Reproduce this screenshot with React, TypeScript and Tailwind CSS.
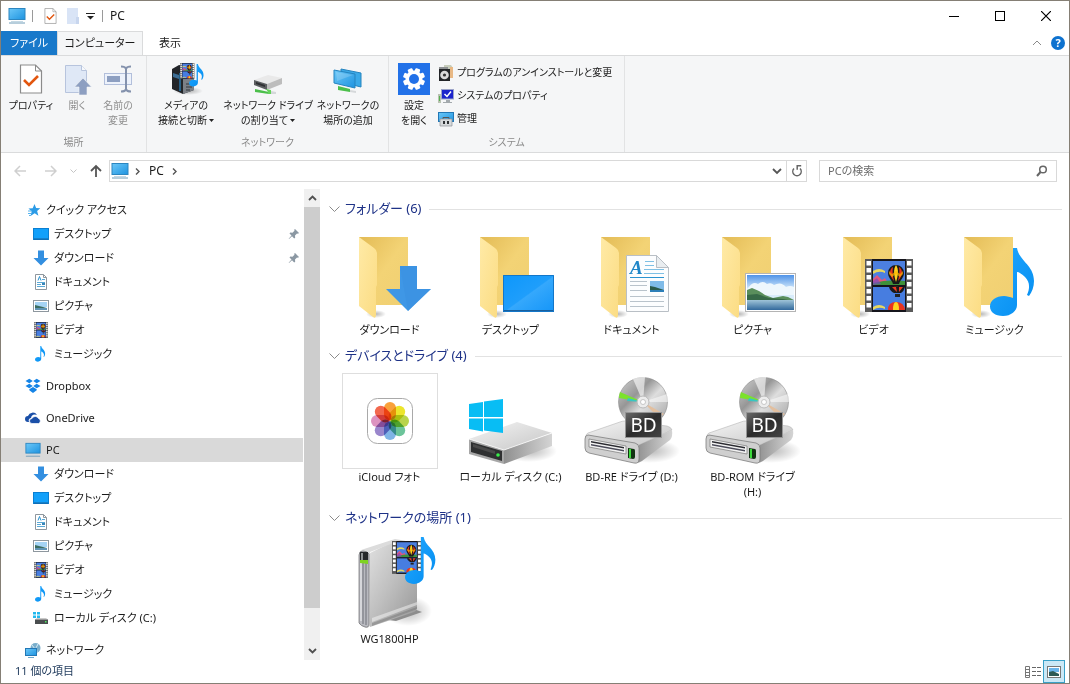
import React, { ReactNode } from "react";

/* ---------- shared drawing parts ---------- */

function Defs() {
  return (
    <svg width="0" height="0" className="absolute" aria-hidden="true">
      <defs>
        <linearGradient id="folderBack" x1="0" y1="0" x2="1" y2="1">
          <stop offset="0" stopColor="#e3bb55" />
          <stop offset="0.5" stopColor="#f3d375" />
          <stop offset="1" stopColor="#f0cf72" />
        </linearGradient>
        <linearGradient id="folderFront" x1="0" y1="0" x2="1" y2="1">
          <stop offset="0" stopColor="#ffeaa6" />
          <stop offset="1" stopColor="#fbdc83" />
        </linearGradient>
        <linearGradient id="screen" x1="0" y1="0" x2="1" y2="1">
          <stop offset="0" stopColor="#6cc8f8" />
          <stop offset="1" stopColor="#1d93e0" />
        </linearGradient>
        <linearGradient id="desk" x1="0" y1="0" x2="1" y2="1">
          <stop offset="0" stopColor="#0d97fb" />
          <stop offset="0.5" stopColor="#1f9efb" />
          <stop offset="0.52" stopColor="#35a8fc" />
          <stop offset="1" stopColor="#1495f8" />
        </linearGradient>
        <linearGradient id="metalTop" x1="0" y1="0" x2="1" y2="1">
          <stop offset="0" stopColor="#f4f4f4" />
          <stop offset="1" stopColor="#c6c6c6" />
        </linearGradient>
        <linearGradient id="metalSide" x1="0" y1="0" x2="1" y2="0">
          <stop offset="0" stopColor="#8f8f8f" />
          <stop offset="0.6" stopColor="#bababa" />
          <stop offset="1" stopColor="#d4d4d4" />
        </linearGradient>
        <linearGradient id="tower" x1="0" y1="0" x2="1" y2="1">
          <stop offset="0" stopColor="#e2e2e2" />
          <stop offset="0.5" stopColor="#bebebe" />
          <stop offset="1" stopColor="#959595" />
        </linearGradient>
        <linearGradient id="disc" x1="0" y1="0" x2="1" y2="1">
          <stop offset="0" stopColor="#d4d4d4" />
          <stop offset="0.35" stopColor="#969696" />
          <stop offset="0.55" stopColor="#dedede" />
          <stop offset="1" stopColor="#9e9e9e" />
        </linearGradient>
        <linearGradient id="sky" x1="0" y1="0" x2="0" y2="1">
          <stop offset="0" stopColor="#4f93e8" />
          <stop offset="0.55" stopColor="#d8ecfb" />
        </linearGradient>
        <linearGradient id="sea" x1="0" y1="0" x2="0" y2="1">
          <stop offset="0" stopColor="#9fc4d8" />
          <stop offset="1" stopColor="#32699c" />
        </linearGradient>
        <linearGradient id="note" x1="0" y1="0" x2="1" y2="1">
          <stop offset="0" stopColor="#22a8ff" />
          <stop offset="1" stopColor="#048df0" />
        </linearGradient>
        <linearGradient id="plate" x1="0" y1="0" x2="1" y2="1">
          <stop offset="0" stopColor="#6a6a6a" />
          <stop offset="0.5" stopColor="#2c2c2c" />
          <stop offset="1" stopColor="#454545" />
        </linearGradient>
        <radialGradient id="soft">
          <stop offset="0" stopColor="#000" stopOpacity="0.28" />
          <stop offset="1" stopColor="#000" stopOpacity="0" />
        </radialGradient>
      </defs>
    </svg>
  );
}

function Balloon({ x, y }: { x: number; y: number }) {
  return (
    <g transform={`translate(${x} ${y})`}>
      <path d="M-8 0a8 8 0 0 1 16 0c0 5-4 7-5 11h-6c-1-4-5-6-5-11z" fill="#1a1a1a" />
      <path d="M-6 0a6 7 0 0 1 3-6c-1 5 0 9 1 14c-2-3-4-5-4-8z" fill="#e8331e" />
      <path d="M6 0a6 7 0 0 0-3-6c1 5 0 9-1 14c2-3 4-5 4-8z" fill="#e8331e" />
      <path d="M0-8c-3 4-2 11 0 17c2-6 3-13 0-17z" fill="#ffd21f" />
      <path d="M-7-2l3 3l4-3l4 3l3-3v3l-3 3l-4-3l-4 3l-3-3z" fill="#ffb400" opacity="0.7" />
      <rect x="-2" y="13" width="4" height="3" fill="#3a2412" />
    </g>
  );
}

/* 48 x 53 strip of film */
function Film() {
  const holes = [2, 9, 16, 23, 30, 37, 44];
  return (
    <g>
      <rect width="48" height="53" fill="#5a5a5a" />
      <rect x="7" width="34" height="53" fill="#15151c" />
      <rect x="8" y="2" width="32" height="24" fill="#4c7fe0" />
      <path d="M8 12q6-4 12 0v2q-6-3-12 1z" fill="#e6d860" />
      <path d="M8 26v-6l4-4l5 5l3-2l4 7z" fill="#e2567e" />
      <path d="M8 26v-2q16-4 32-2v4z" fill="#3f9139" />
      <path d="M8 26v-4l4-3l4 6z" fill="#7a4ac0" opacity="0.7" />
      <Balloon x={31} y={14} />
      <rect x="8" y="28" width="32" height="23" fill="#477de0" />
      <path d="M24 28h16q-1 4-4 6h-7q-4-2-5-6z" fill="#1a1a1a" />
      <path d="M27 28h4l1 5zM34 28h4l-4 5z" fill="#ee3a24" />
      <rect x="30" y="35" width="5" height="3" fill="#222" />
      <path d="M8 48q6-4 12 0v2q-6-3-12 1z" fill="#e6d860" />
      <path d="M23 51q0-8 8-8t9 8z" fill="#e8331e" />
      <path d="M28 51q0-8 3-8t3 8z" fill="#ffd21f" />
      {holes.map((y) => (
        <g key={y} fill="#fff">
          <rect x="1.500" y={y} width="4.500" height="4.500" />
          <rect x="42" y={y} width="4.500" height="4.500" />
        </g>
      ))}
    </g>
  );
}

/* note drawn inside 46 x 68 */
function Note() {
  return (
    <path
      d="M23 0h4c2 13 17 17 17 33c0 6-2 11-5 15l-2-1c3-7 3-13-2-18c-3-3-6-5-8-5v33c0 6-6 11-14 11s-13-4-13-9.500c0-6 6-10.500 14-10.500c3 0 6 1 9 2z"
      fill="url(#note)"
    />
  );
}

function Photo({ w, h }: { w: number; h: number }) {
  return (
    <svg width={w} height={h} viewBox="0 0 51 39" preserveAspectRatio="none">
      <rect x="0.5" y="0.5" width="50" height="38" fill="#fff" stroke="#b4b4b4" />
      <rect x="2" y="2" width="47" height="26" fill="url(#sky)" />
      <path d="M4 14q4-6 9-3q5-4 9 0q4-2 7 1q7-4 12 2q4-2 8 0v8H2v-6z" fill="#eef7fd" />
      <path d="M2 17l5-2l7 3l6 4l8 3l10-2l5 1l6 3v1H2z" fill="#5a8f5c" />
      <path d="M2 22l10-1l12 4l14 1l11 2H2z" fill="#376a48" />
      <rect x="2" y="27" width="47" height="10" fill="url(#sea)" />
    </svg>
  );
}

/* ---------- large 96px icons ---------- */

function Big({ children }: { children: ReactNode }) {
  return (
    <svg width="96" height="96" viewBox="0 0 96 96" className="block" aria-hidden="true">
      {children}
    </svg>
  );
}

function Folder({ children }: { children: ReactNode }) {
  return (
    <Big>
      <ellipse cx="34" cy="88" rx="10" ry="4" fill="url(#soft)" />
      <path d="M17 11h49v68H17z" fill="url(#folderBack)" />
      <path d="M17 11l15 11q3 2 3 5v32l-1 2v28q0 4-3 2L17 80z" fill="url(#folderFront)" />
      {children}
    </Big>
  );
}

const DownloadFolder = () => (
  <Folder>
    <path d="M58 40h17v23h14L66 85L44 63h14z" fill="#3f97e6" />
    <path d="M58 40h17v23h14L66 85z" fill="#3a8fdf" opacity="0.5" />
  </Folder>
);

const DesktopFolder = () => (
  <Folder>
    <rect x="40" y="49" width="51" height="37" fill="url(#desk)" />
    <path d="M40 84h51v2H40z" fill="#1a5f9c" />
    <path d="M40.500 49.500h50v36h-50z" fill="none" stroke="#1377c9" />
  </Folder>
);

const DocumentFolder = () => (
  <Folder>
    <path d="M42.500 29.500h30l12 12v44h-42z" fill="#fcfdfe" stroke="#b9bfc5" />
    <path d="M72.500 29.500v12h12z" fill="#e9edf0" stroke="#b9bfc5" />
    <text x="46" y="48" fontSize="19" fontStyle="italic" fontWeight="bold" fontFamily="Liberation Serif, serif" fill="#1f86c8">
      A
    </text>
    <path d="M61 35.500h9M61 39.500h9M60 43.500h20M60 47.500h20" stroke="#7fc0e4" fill="none" />
    <path d="M46 51.500h34" stroke="#2b93d0" />
    <path d="M46 55.500h17M46 59.500h17M46 64.500h17M46 70.500h34M46 75.500h34M46 80.500h34" stroke="#b9c3cb" />
    <rect x="66" y="55" width="14" height="11" fill="#7fbbe8" />
    <path d="M66 60l5 1l9 3v2H66z" fill="#2b5a4a" />
    <path d="M66 64h14v2H66z" fill="#2d7fb8" />
  </Folder>
);

const PictureFolder = () => (
  <Folder>
    <g transform="translate(40 47)">
      <Photo w={51} h={39} />
    </g>
  </Folder>
);

const VideoFolder = () => (
  <Folder>
    <g transform="translate(39 33)">
      <Film />
    </g>
  </Folder>
);

const MusicFolder = () => (
  <Folder>
    <g transform="translate(43 22)">
      <Note />
    </g>
  </Folder>
);

function PhotosApp() {
  const petals = ["#f9a13a", "#ece52c", "#b9d44c", "#6cc49a", "#7fb4e6", "#9a86cc", "#dd93c0", "#f2684e"];
  return (
    <Big>
      <rect x="0.500" y="0.500" width="95" height="95" fill="#fff" stroke="#dedede" />
      <rect x="25.500" y="25.500" width="45" height="45" rx="10" fill="#fff" stroke="#a9a9a9" />
      {petals.map((c, i) => (
        <rect
          key={c}
          x="42"
          y="29"
          width="12"
          height="18.500"
          rx="6"
          fill={c}
          className="mix-blend-multiply"
          transform={`rotate(${i * 45} 48 48)`}
        />
      ))}
    </Big>
  );
}

const LocalDisk = () => (
  <Big>
    <ellipse cx="66" cy="78" rx="28" ry="11" fill="url(#soft)" />
    <path d="M6 66L54 49l35 11L41 77z" fill="url(#metalTop)" />
    <path d="M89 60v13L41 91V77z" fill="url(#metalSide)" />
    <path d="M6 66l35 11v14L6 81z" fill="#a7a7a7" />
    <path d="M8 69l31 9v10L8 79z" fill="#2f3031" />
    <path d="M10 71l22 7v3l-22-7z" fill="#4a4a4a" />
    <circle cx="35" cy="82" r="1.800" fill="#38ee4a" />
    <path d="M6 66l35 11l48-17" fill="none" stroke="#fff" strokeOpacity="0.8" />
    <g fill="#08bdf4">
      <path d="M6 31l14-2v15H6zM21 28.500L40 26v18H21zM6 45.500h14v13L6 56zM21 45.500h19V60l-19-2.500z" />
    </g>
  </Big>
);

const BluRay = () => (
  <Big>
    <ellipse cx="66" cy="78" rx="30" ry="12" fill="url(#soft)" />
    <circle cx="59" cy="29" r="24.500" fill="url(#disc)" stroke="#8d8d8d" strokeWidth="0.600" />
    <path d="M59 29L36 19a25 25 0 0 0-1 6z" fill="#7be22c" />
    <path d="M59 29L44 25l-1 3z" fill="#37c6c2" />
    <path d="M59 29l21 12l-5 4z" fill="#e2bf9f" />
    <path d="M59 29L49 6a25 25 0 0 1 12-2z" fill="#fff" opacity="0.6" />
    <path d="M59 29l24-8a25 25 0 0 1 1 8z" fill="#fff" opacity="0.5" />
    <circle cx="59" cy="29" r="6" fill="#ececec" stroke="#bababa" />
    <circle cx="59" cy="29" r="2.500" fill="#fff" stroke="#999" strokeWidth="0.500" />
    <path d="M2 63q0-2 2-3l32-11q2-1 5-1l42 5q4 1 5 4L55 72z" fill="url(#metalTop)" stroke="#b5b5b5" strokeWidth="0.600" />
    <path d="M88 57q1 7-2 10L58 88q-3 2-6 2l3-18z" fill="url(#metalSide)" />
    <path d="M4 62l47 8q4 1 4 5v11q0 5-5 4L5 80q-4-1-4-5V66q0-4 3-4z" fill="#cfcfcf" stroke="#7d7d7d" strokeWidth="0.800" />
    <path d="M5 66l37 7v8L5 74z" fill="#f2f2f2" stroke="#777" strokeWidth="0.700" />
    <path d="M7 68l33 6v1.500L7 69.500z" fill="#2a2a30" />
    <path d="M7 71l33 6v1.500L7 72.500z" fill="#4a4a58" />
    <path d="M44 75l6 1q1 0 1 2v6q0 2-2 2l-5-1z" fill="#123312" />
    <path d="M45 76h2v9h-2z" fill="#3bdc3b" />
    <rect x="41.500" y="39.500" width="36" height="25" fill="url(#plate)" stroke="#969696" />
    <text x="59.500" y="59" fontSize="19" textAnchor="middle" fontFamily="Noto Sans, sans-serif" fill="#fff">
      BD
    </text>
  </Big>
);

const NetworkDevice = () => (
  <Big>
    <ellipse cx="66" cy="76" rx="24" ry="15" fill="url(#soft)" />
    <path d="M38 84l28-12l14 5l-26 9z" fill="#8d8d8d" />
    <path d="M26 19L52 6q3-1 6-1l17 3v64q0 4-3 5L28 92z" fill="url(#tower)" />
    <path d="M30 83l45-16v3L30 87z" fill="#fff" opacity="0.45" />
    <path d="M30 88l45-16v2L30 91z" fill="#777" opacity="0.5" />
    <path d="M17 20q0-5 5-6L53 4l6 1L28 17v74q-2 3-6 1l-5-3z" fill="#dcdcdc" />
    <path d="M17 20q0-4 4-4t6 3v70q0 4-4 3t-6-4z" fill="#b8b9bf" stroke="#6d6d70" strokeWidth="0.700" />
    <path d="M21 28v61M24 28v62" stroke="#6e7078" />
    <path d="M19 28v58" stroke="#f4f4f6" />
    <path d="M18 17h8v10h-8z" fill="#26282a" />
    <path d="M19 18h2v8h-2z" fill="#8f9294" />
    <path d="M18 25h8v4l-8-1z" fill="#7ed321" />
    <g transform="translate(50 6) scale(0.620)">
      <Film />
    </g>
    <g transform="translate(63 2) scale(0.690)">
      <Note />
    </g>
  </Big>
);

/* ---------- small icons ---------- */

function Svg({ s = 16, children, v = 16 }: { s?: number; v?: number; children: ReactNode }) {
  return (
    <svg width={s} height={s} viewBox={`0 0 ${v} ${v}`} className="block shrink-0" aria-hidden="true">
      {children}
    </svg>
  );
}

const PcIcon = ({ s = 18 }: { s?: number }) => (
  <Svg s={s} v={18}>
    <rect x="1" y="1.500" width="16" height="11" fill="url(#screen)" stroke="#2c86c0" />
    <path d="M3 14.500h12" stroke="#c4d8e4" />
    <path d="M1 16h16" stroke="#6f9cb8" />
  </Svg>
);
const StarIcon = () => (
  <Svg>
    <path d="M9.500 2l1.600 4l4.200.3l-3.200 2.800l1.300 4.700L9.700 11.300L5.500 14l1.200-4.600L3.500 6.600l4.200-.4z" fill="#2b9be6" />
    <path d="M3 9h4M3 11.500h3M4 13.500h2" stroke="#56b4ef" />
  </Svg>
);
const DesktopIcon = () => (
  <Svg>
    <rect x="0.500" y="2.500" width="15" height="11" fill="#12a0fa" stroke="#0a7fd2" />
    <path d="M1 13h14" stroke="#17609a" />
  </Svg>
);
const DownIcon = () => (
  <Svg>
    <path d="M5 0.500h6v7.500h4.500L8 15.500L.5 8H5z" fill="#338fe0" />
  </Svg>
);
const DocIcon = () => (
  <Svg>
    <path d="M2.500.5h8l3 3v12h-11z" fill="#fff" stroke="#8e979e" />
    <path d="M10.500.5v3h3" fill="none" stroke="#8e979e" />
    <path d="M5 6.500l1.500-4L8 6.500" fill="none" stroke="#2a91cf" />
    <path d="M4 8.500h8M4 10.500h4M4 12.500h8M9 5.500h3" stroke="#59a9d6" />
    <rect x="9" y="9" width="3" height="2" fill="#3a86b8" />
  </Svg>
);
const PicIcon = () => (
  <Svg>
    <rect x="0.500" y="2.500" width="15" height="11" fill="#fff" stroke="#8e979e" />
    <rect x="2" y="4" width="12" height="5" fill="#a5d4f5" />
    <path d="M2 7l4 1l8 2v2H2z" fill="#3a6d62" />
    <path d="M2 10h12v2H2z" fill="#5e93b4" />
  </Svg>
);
const VideoIcon = () => (
  <Svg>
    <g transform="translate(1 0) scale(0.292 0.300)">
      <Film />
    </g>
  </Svg>
);
const MusicIcon = () => (
  <Svg>
    <g transform="translate(2 0) scale(0.230)">
      <Note />
    </g>
  </Svg>
);
const DropboxIcon = () => (
  <Svg>
    <path
      d="M4.300 0.800L7.800 3L4.300 5.300L0.500 3zM11.700 0.800L15.500 3l-3.800 2.300L8.200 3zM4.300 5.700L7.800 8L4.300 10.300L0.500 8zM11.700 5.700L15.500 8l-3.800 2.300L8.200 8zM4.300 11.200L8 9l3.700 2.200v1L8 15l-3.700-2.800z"
      fill="#1584e6"
    />
  </Svg>
);
const OneDriveIcon = () => (
  <Svg>
    <path d="M3 12a3 3 0 0 1 0-6a5 5 0 0 1 9-1a4 4 0 0 0-6 3a3 3 0 0 0-2 4z" fill="#1a4fa8" />
    <path d="M7 13.500a2.500 2.500 0 0 1 0-5a3.600 3.600 0 0 1 6.500 0a2.600 2.600 0 0 1 0 5z" fill="#1a4fa8" stroke="#fff" strokeWidth="0.700" />
  </Svg>
);
const CDriveIcon = () => (
  <Svg>
    <path d="M0 2h3v2.500H0zM4 2h3v2.500H4zM0 5.500h3V8H0zM4 5.500h3V8H4z" fill="#22b9ee" />
    <path d="M2 9.500L4 8h9l2 1.500z" fill="#c9c9c9" />
    <rect x="2" y="9.500" width="13" height="4.500" fill="#4a4d4f" />
    <rect x="12" y="11" width="1.500" height="1.500" fill="#4cf060" />
  </Svg>
);
const NetworkIcon = () => (
  <Svg>
    <circle cx="10.500" cy="6" r="5" fill="#7aaecb" />
    <path d="M7 3q3 2 3 8M13 2q-3 3-1 8" stroke="#d8ebf5" fill="none" />
    <rect x="0.500" y="6.500" width="11" height="7" fill="url(#screen)" stroke="#2277b5" />
    <path d="M3 15.500h6" stroke="#6fa9cc" />
  </Svg>
);
const PinIcon = () => (
  <Svg s={12} v={12}>
    <path d="M7 1l4 4l-1 .8l-1-.2l-2 2l.2 2.200l-1 .7L4 8.200L1 11l-.3-.3L3.500 7.600L1.500 5.500l.8-1l2.200.2l2-2L6.200 1.700z" fill="#8b98a3" />
  </Svg>
);

const CheckDoc = ({ w = 24, h = 30 }: { w?: number; h?: number }) => (
  <svg width={w} height={h} viewBox="0 0 24 30" className="block" aria-hidden="true">
    <path d="M1.500 1h15l6 6v22h-21z" fill="#fff" stroke="#8b8b8b" strokeWidth="1.200" />
    <path d="M16.500 1v6h6" fill="none" stroke="#8b8b8b" />
    <path d="M5 16l5 5l9-9" fill="none" stroke="#e2560f" strokeWidth="2.600" />
  </svg>
);
const OpenIcon = () => (
  <svg width="32" height="32" viewBox="0 0 32 32" aria-hidden="true">
    <path d="M4.500 2.500h16l5 5v22h-21z" fill="#dfe8f6" stroke="#b7c4dd" />
    <path d="M20.500 2.500v5h5" fill="#f7f9fc" stroke="#b7c4dd" />
    <path d="M22 15l8.500 9H26v8h-8v-8h-4.500z" fill="#8d9fc1" stroke="#f5f6f7" strokeWidth="0.600" />
  </svg>
);
const RenameIcon = () => (
  <svg width="32" height="32" viewBox="0 0 32 32" aria-hidden="true">
    <rect x="2.500" y="10.500" width="27" height="11" fill="#edf2fb" stroke="#b2bfdb" />
    <rect x="5" y="13" width="13" height="6" fill="#8d9fc1" />
    <path d="M19 3.500q4 0 5 2q1-2 5-2M19 28.500q4 0 5-2q1 2 5 2M24 5v22" fill="none" stroke="#8492ad" strokeWidth="2" />
  </svg>
);
const MediaIcon = () => (
  <svg width="36" height="32" viewBox="0 0 36 32" aria-hidden="true">
    <ellipse cx="20" cy="28" rx="15" ry="4" fill="url(#soft)" />
    <path d="M4 6l7-4l15 3v22l-11 4L4 26z" fill="#222529" />
    <path d="M15 9l11-3v21l-11 4z" fill="#7b8087" />
    <path d="M18 21h6M18 24h6M18 27h4" stroke="#33373c" />
    <path d="M5 10l6 2v4l-6-2z" fill="#3d6e95" />
    <path d="M12 10v18" stroke="#2b9be6" />
    <g transform="translate(12 0) scale(0.300)">
      <Film />
    </g>
    <g transform="translate(21 1) scale(0.330)">
      <Note />
    </g>
  </svg>
);
const NetDriveIcon = () => (
  <svg width="32" height="32" viewBox="0 0 32 32" aria-hidden="true">
    <path d="M2 17l14-5l14 3l-15 6z" fill="#e9e9e9" />
    <path d="M30 15v6l-15 6v-6z" fill="#bdbdbd" />
    <path d="M2 17l13 4v6L2 22z" fill="#5b5e60" />
    <path d="M4 19l9 3v2l-9-3z" fill="#2f3133" />
    <path d="M3 26l14 3v2L3 29z" fill="#4cbf4b" />
    <path d="M14 26l5 1v4h-3v-2z" fill="#63d35a" />
    <path d="M19 28l5 1v2h-5z" fill="#d5d8da" />
  </svg>
);
const NetPlaceIcon = () => (
  <svg width="32" height="32" viewBox="0 0 32 32" aria-hidden="true">
    <path d="M9 6l20 4v14L9 19z" fill="#3aa9e8" stroke="#2584bf" />
    <path d="M2 7l21 4v14L2 20z" fill="url(#screen)" stroke="#2584bf" />
    <path d="M4 9l17 3L5 18z" fill="#fff" opacity="0.18" />
    <path d="M6 23l12 3v3L6 27z" fill="#4cbf4b" />
    <path d="M18 27l6 1v2l-6-1z" fill="#d5d8da" />
  </svg>
);
const GearIcon = () => (
  <svg width="32" height="32" viewBox="0 0 32 32" aria-hidden="true">
    <rect width="32" height="32" fill="#2271e8" />
    <g fill="#fff">
      {[0, 45, 90, 135].map((a) => (
        <rect key={a} x="13.500" y="5" width="5" height="22" rx="1" transform={`rotate(${a + 22} 16 16)`} />
      ))}
      <circle cx="16" cy="16" r="8.500" />
    </g>
    <circle cx="16" cy="16" r="5" fill="#2271e8" />
  </svg>
);
const UninstallIcon = () => (
  <Svg>
    <path d="M6 0h7l2 3v9H6z" fill="#c7cdbc" />
    <path d="M12 2h3v11h-3z" fill="#e8b884" />
    <rect x="1" y="4" width="11" height="12" fill="#222427" />
    <circle cx="6.500" cy="10" r="4.300" fill="#dadada" />
    <circle cx="6.500" cy="10" r="1.600" fill="#333" />
    <path d="M1 3h9" stroke="#8d9092" strokeWidth="2" />
  </Svg>
);
const SysPropIcon = () => (
  <Svg>
    <path d="M0 6h3v9H0z" fill="#b9c2b2" />
    <path d="M1 8h1v5H1z" fill="#57af50" />
    <rect x="3.500" y="1.500" width="12" height="9.500" fill="#1b24cc" stroke="#9da5c9" />
    <path d="M6.500 6l2.500 2.500l4-5" fill="none" stroke="#fff" strokeWidth="1.500" />
    <path d="M8 12h4v2H8zM5 14h9v1H5z" fill="#a3a9ad" />
  </Svg>
);
const ManageIcon = () => (
  <Svg>
    <rect x="0.500" y="1.500" width="15" height="9" fill="url(#screen)" stroke="#2277b5" />
    <path d="M5 8V6.500h6V8" fill="none" stroke="#555" />
    <path d="M2 8h12v7H2z" fill="#d7dadc" stroke="#8c9195" strokeWidth="0.700" />
    <path d="M5 10h2v3H5zM9 10h2v3H9z" fill="#2f3235" />
  </Svg>
);

/* ---------- window sections ---------- */

function TitleBar() {
  return (
    <header className="flex h-[30px] shrink-0 items-center pb-px pl-[7px]">
      <PcIcon />
      <span className="ml-[6px] h-3 w-px bg-[#9a9a9a]" />
      <button aria-label="プロパティ" className="ml-[11px]">
        <CheckDoc w={13} h={16} />
      </button>
      <button aria-label="新しいフォルダー" className="ml-[9px]">
        <svg width="14" height="16" viewBox="0 0 14 16" className="block">
          <path d="M1 0h11v9l1 1v6H1z" fill="#d9e4f6" />
          <path d="M10 9h3v7h-3z" fill="#c8d6ee" />
        </svg>
      </button>
      <button aria-label="カスタマイズ" className="ml-[6px]">
        <svg width="9" height="8" viewBox="0 0 9 8" className="block">
          <path d="M0 1.500h9" stroke="#222" />
          <path d="M1 4h7L4.500 7.500z" fill="#222" />
        </svg>
      </button>
      <span className="ml-[7px] h-3 w-px bg-[#9a9a9a]" />
      <h1 className="ml-[7px] text-[12px]">PC</h1>
      <div className="ml-auto flex h-full">
        <button aria-label="最小化" className="grid w-[46px] place-items-center">
          <svg width="10" height="10">
            <path d="M0 5.500h10" stroke="#000" />
          </svg>
        </button>
        <button aria-label="最大化" className="grid w-[46px] place-items-center">
          <svg width="10" height="10">
            <rect x="0.500" y="0.500" width="9" height="9" fill="none" stroke="#000" />
          </svg>
        </button>
        <button aria-label="閉じる" className="grid w-[46px] place-items-center">
          <svg width="10" height="10">
            <path d="M0 0l10 10M10 0L0 10" stroke="#000" strokeWidth="1.200" />
          </svg>
        </button>
      </div>
    </header>
  );
}

function Tabs() {
  return (
    <div className="flex h-6 shrink-0">
      <button className="w-14 bg-[#1979ca] text-white">ファイル</button>
      <button className="-mb-px w-[86px] border border-b-0 border-[#dadbdc] bg-[#f5f6f7] pb-px">コンピューター</button>
      <button className="w-[54px]">表示</button>
      <div className="ml-auto flex items-center gap-[9px] pr-1">
        <button aria-label="リボンの最小化">
          <svg width="10" height="6" className="block">
            <path d="M1 5l4-4l4 4" fill="none" stroke="#8a8a8a" />
          </svg>
        </button>
        <button aria-label="ヘルプ" className="grid size-[14px] place-items-center rounded-full bg-[#0e72cf] text-[11px] font-bold leading-[14px] text-white">
          ?
        </button>
      </div>
    </div>
  );
}

type CommandProps = { icon: ReactNode; lines: string[]; className: string; muted?: boolean; menu?: boolean };

function Command({ icon, lines, className, muted, menu }: CommandProps) {
  return (
    <button className={`flex flex-col items-center whitespace-nowrap ${muted ? "text-[#8f8f8f]" : ""} ${className}`}>
      <span className="grid h-8 place-items-center">{icon}</span>
      <span className="mt-[3px] leading-[15px]">
        {lines.map((l, i) => (
          <span key={l} className="flex items-center justify-center gap-[2px]">
            {l}
            {menu && i === lines.length - 1 && (
              <svg width="5" height="3" className="block">
                <path d="M0 0h5L2.500 3z" fill="#222" />
              </svg>
            )}
          </span>
        ))}
      </span>
    </button>
  );
}

function Group({ label, children, className }: { label: string; children: ReactNode; className: string }) {
  return (
    <section className={`flex shrink-0 flex-col justify-between border-r border-[#e2e3e4] pt-[7px] ${className}`}>
      <div className="flex">{children}</div>
      <h2 className="pb-[1px] text-center leading-[18px] text-[#8a8a8a]">{label}</h2>
    </section>
  );
}

function Ribbon() {
  const small = [
    { icon: <UninstallIcon />, label: "プログラムのアンインストールと変更" },
    { icon: <SysPropIcon />, label: "システムのプロパティ" },
    { icon: <ManageIcon />, label: "管理" },
  ];
  return (
    <div className="flex h-[98px] shrink-0 border-y border-[#dadbdc] bg-[#f5f6f7] text-[10px]">
      <Group label="場所" className="w-[146px] px-[3px]">
        <Command className="w-[54px]" icon={<CheckDoc />} lines={["プロパティ"]} />
        <Command className="w-[38px]" muted icon={<OpenIcon />} lines={["開く"]} />
        <Command className="w-[44px]" muted icon={<RenameIcon />} lines={["名前の", "変更"]} />
      </Group>
      <Group label="ネットワーク" className="w-[242px] px-[3px]">
        <Command className="w-[72px]" menu icon={<MediaIcon />} lines={["メディアの", "接続と切断"]} />
        <Command className="w-[92px]" menu icon={<NetDriveIcon />} lines={["ネットワーク ドライブ", "の割り当て"]} />
        <Command className="w-[68px]" icon={<NetPlaceIcon />} lines={["ネットワークの", "場所の追加"]} />
      </Group>
      <Group label="システム" className="w-[236px] px-[3px]">
        <Command className="w-[44px]" icon={<GearIcon />} lines={["設定", "を開く"]} />
        <div className="-mt-[2px] ml-[2px] flex flex-col">
          {small.map((s) => (
            <button key={s.label} className="flex h-[23px] items-center gap-[3px] whitespace-nowrap">
              {s.icon}
              {s.label}
            </button>
          ))}
        </div>
      </Group>
    </div>
  );
}

function AddressBar() {
  return (
    <div className="flex h-9 shrink-0 items-center pl-[13px] pr-3">
      <button aria-label="戻る" className="w-[14px]">
        <svg width="13" height="12" className="block">
          <path d="M6 1L1 6l5 5M1 6h11" fill="none" stroke="#cfcfcf" strokeWidth="1.500" />
        </svg>
      </button>
      <button aria-label="進む" className="ml-4 w-[14px]">
        <svg width="13" height="12" className="block">
          <path d="M7 1l5 5l-5 5M12 6H1" fill="none" stroke="#cfcfcf" strokeWidth="1.500" />
        </svg>
      </button>
      <button aria-label="履歴" className="ml-3">
        <svg width="7" height="5" className="block">
          <path d="M.5.5l3 3l3-3" fill="none" stroke="#c4c4c4" />
        </svg>
      </button>
      <button aria-label="上へ" className="ml-[13px]">
        <svg width="12" height="14" className="block">
          <path d="M1 7l5-5l5 5M6 2v11" fill="none" stroke="#555" strokeWidth="1.800" />
        </svg>
      </button>
      <div className="ml-[7px] flex h-[22px] min-w-0 flex-1 items-center border border-[#d9d9d9] pl-[1px]">
        <PcIcon />
        <svg width="5" height="7" className="ml-[6px] block">
          <path d="M1 .5l3 3l-3 3" fill="none" stroke="#555" strokeWidth="1.400" />
        </svg>
        <button className="ml-[9px] text-[12px]">PC</button>
        <svg width="5" height="7" className="ml-[8px] block">
          <path d="M1 .5l3 3l-3 3" fill="none" stroke="#555" strokeWidth="1.400" />
        </svg>
        <button aria-label="以前の場所" className="ml-auto mr-[4px]">
          <svg width="10" height="7" className="block">
            <path d="M1 1l4 4l4-4" fill="none" stroke="#555" strokeWidth="1.800" />
          </svg>
        </button>
        <button aria-label="最新の情報に更新" className="grid h-full w-5 place-items-center border-l border-[#d9d9d9]">
          <svg width="12" height="12" viewBox="0 0 12 12">
            <path d="M3 3.500a4.200 4.200 0 1 0 6 0" fill="none" stroke="#666" strokeWidth="1.500" />
            <path d="M5.500 .8h4.700M6.200 .5v4.300" stroke="#666" strokeWidth="1.500" />
          </svg>
        </button>
      </div>
      <label className="ml-3 flex h-[22px] w-[238px] items-center border border-[#d9d9d9] pl-2 pr-2">
        <input type="search" aria-label="PCの検索" placeholder="PCの検索" className="min-w-0 flex-1 bg-transparent outline-none placeholder:text-[#6d6d6d]" />
        <svg width="12" height="12" className="block">
          <circle cx="7" cy="4.500" r="3.300" fill="none" stroke="#666" strokeWidth="1.500" />
          <path d="M4.500 7L1 11" stroke="#666" strokeWidth="2" />
        </svg>
      </label>
    </div>
  );
}

type NavItem = { icon: ReactNode; label: string; pin?: boolean };
type NavGroup = { head: NavItem; items: NavItem[]; active?: boolean };

const desktop = { icon: <DesktopIcon />, label: "デスクトップ" };
const download = { icon: <DownIcon />, label: "ダウンロード" };
const media: NavItem[] = [
  { icon: <DocIcon />, label: "ドキュメント" },
  { icon: <PicIcon />, label: "ピクチャ" },
  { icon: <VideoIcon />, label: "ビデオ" },
  { icon: <MusicIcon />, label: "ミュージック" },
];

const nav: NavGroup[] = [
  { head: { icon: <StarIcon />, label: "クイック アクセス" }, items: [{ ...desktop, pin: true }, { ...download, pin: true }, ...media] },
  { head: { icon: <DropboxIcon />, label: "Dropbox" }, items: [] },
  { head: { icon: <OneDriveIcon />, label: "OneDrive" }, items: [] },
  { head: { icon: <PcIcon s={16} />, label: "PC" }, active: true, items: [download, desktop, ...media, { icon: <CDriveIcon />, label: "ローカル ディスク (C:)" }] },
  { head: { icon: <NetworkIcon />, label: "ネットワーク" }, items: [] },
];

function Sidebar() {
  return (
    <div className="flex w-[319px] shrink-0 overflow-hidden">
      <nav className="flex flex-1 flex-col gap-2 overflow-hidden pr-px pt-[9px]">
        {nav.map((g) => (
          <ul key={g.head.label}>
            <li>
              <a href="#" className={`flex h-6 items-center gap-[5px] pl-6 ${g.active ? "bg-[#d9d9d9]" : ""}`}>
                {g.head.icon}
                {g.head.label}
              </a>
            </li>
            {g.items.map((i) => (
              <li key={i.label}>
                <a href="#" className="flex h-6 items-center gap-[5px] pl-8 pr-[3px]">
                  {i.icon}
                  {i.label}
                  {i.pin && (
                    <span className="ml-auto">
                      <PinIcon />
                    </span>
                  )}
                </a>
              </li>
            ))}
          </ul>
        ))}
      </nav>
      <div className="flex w-4 shrink-0 flex-col bg-[#f0f0f0]">
        <button aria-label="上へスクロール" className="grid h-[18px] place-items-center">
          <svg width="9" height="6">
            <path d="M1 5l3.500-3.500L8 5" fill="none" stroke="#505050" strokeWidth="1.800" />
          </svg>
        </button>
        <div className="flex-1 bg-[#cdcdcd]" />
        <button aria-label="下へスクロール" className="flex h-[52px] items-end justify-center pb-[6px]">
          <svg width="9" height="6">
            <path d="M1 1l3.500 3.500L8 1" fill="none" stroke="#505050" strokeWidth="1.800" />
          </svg>
        </button>
      </div>
    </div>
  );
}

const sections = [
  {
    title: "フォルダー (6)",
    items: [
      { icon: <DownloadFolder />, lines: ["ダウンロード"] },
      { icon: <DesktopFolder />, lines: ["デスクトップ"] },
      { icon: <DocumentFolder />, lines: ["ドキュメント"] },
      { icon: <PictureFolder />, lines: ["ピクチャ"] },
      { icon: <VideoFolder />, lines: ["ビデオ"] },
      { icon: <MusicFolder />, lines: ["ミュージック"] },
    ],
  },
  {
    title: "デバイスとドライブ (4)",
    items: [
      { icon: <PhotosApp />, lines: ["iCloud フォト"] },
      { icon: <LocalDisk />, lines: ["ローカル ディスク (C:)"] },
      { icon: <BluRay />, lines: ["BD-RE ドライブ (D:)"] },
      { icon: <BluRay />, lines: ["BD-ROM ドライブ", "(H:)"] },
    ],
  },
  { title: "ネットワークの場所 (1)", items: [{ icon: <NetworkDevice />, lines: ["WG1800HP"] }] },
];

function Content() {
  return (
    <main className="min-w-0 flex-1 overflow-hidden pl-[9px] pr-[7px] pt-2">
      {sections.map((s) => (
        <section key={s.title} className="mb-[7px]">
          <h2 className="mb-[5px] flex h-6 items-center text-[13px] text-[#1e3287]">
            <svg width="11" height="7" className="mr-[5px] block">
              <path d="M.5.5l5 5l5-5" fill="none" stroke="#8a8a8a" />
            </svg>
            {s.title}
            <span className="ml-2 h-px flex-1 bg-[#e2e2e2]" />
          </h2>
          <div className="flex flex-wrap">
            {s.items.map((i) => (
              <button key={i.lines[0]} className="flex w-[121px] flex-col items-center leading-[15px]">
                {i.icon}
                {i.lines.map((l) => (
                  <span key={l}>{l}</span>
                ))}
              </button>
            ))}
          </div>
        </section>
      ))}
    </main>
  );
}

function StatusBar() {
  return (
    <footer className="flex h-[23px] shrink-0 items-center pl-[14px] pr-1 text-[#1e395b]">
      11 個の項目
      <div className="ml-auto flex h-full items-center">
        <button aria-label="詳細表示" className="mr-[1px]">
          <svg width="18" height="14" className="block">
            <path d="M1.500 1.500h4v11h-4zM1 4.500h5M1 7.500h5M1 10.500h5" fill="none" stroke="#777" />
            <path d="M8 2.500h4M13 2.500h4M8 6.500h4M13 6.500h4M8 10.500h4M13 10.500h4" stroke="#666" />
          </svg>
        </button>
        <button aria-label="大アイコン表示" className="grid h-full w-[22px] place-items-center border border-[#3aa0c8] bg-[#cbe8f6]">
          <svg width="14" height="12" className="block">
            <rect x="0.500" y="0.500" width="13" height="11" fill="#fff" stroke="#777" />
            <rect x="2" y="2" width="10" height="4" fill="#6ab4ea" />
            <path d="M2 6l4-1l6 3v2H2z" fill="#2d5a55" />
          </svg>
        </button>
      </div>
    </footer>
  );
}

export default function App() {
  return (
    <div className="flex h-screen flex-col overflow-hidden border border-[#857f75] bg-white text-[11px] text-[#1a1a1a] [font-family:'Noto_Sans','Noto_Sans_CJK_JP',sans-serif] [font-feature-settings:'palt']">
      <Defs />
      <TitleBar />
      <Tabs />
      <Ribbon />
      <AddressBar />
      <div className="flex min-h-0 flex-1">
        <Sidebar />
        <Content />
      </div>
      <StatusBar />
    </div>
  );
}
